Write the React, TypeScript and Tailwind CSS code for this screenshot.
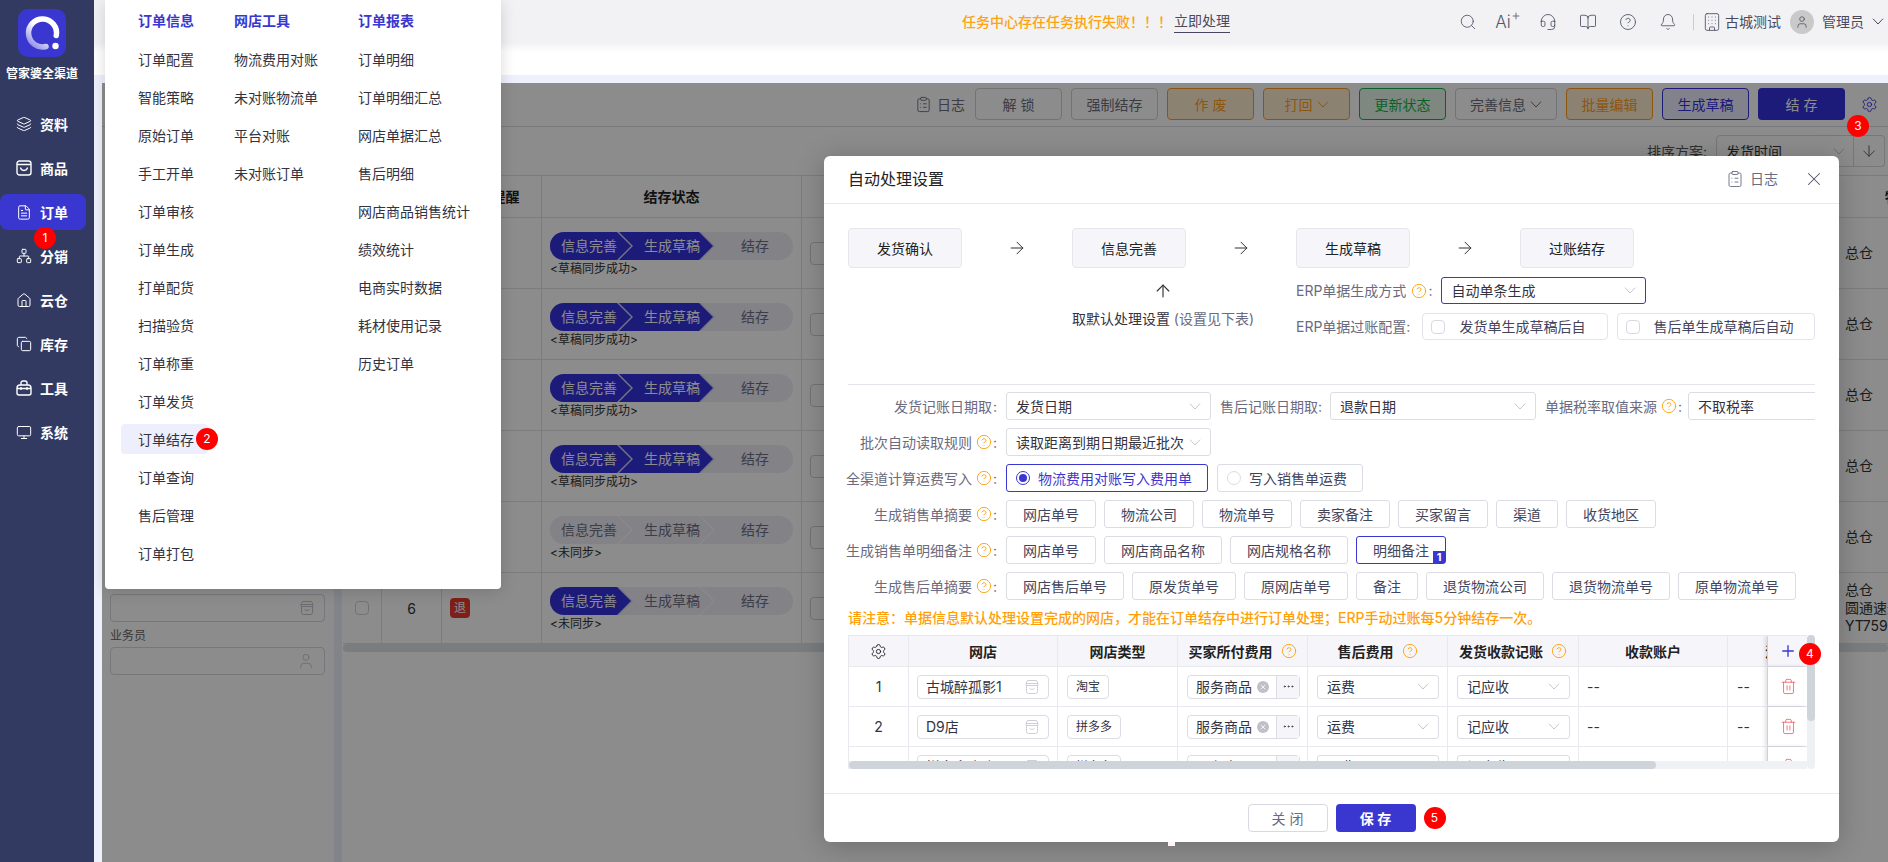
import React from 'react';
import {
  Layers, FileText, Network, Monitor, Search, Headset, BookOpen, CircleHelp, Bell, Building, User,
  Settings, ClipboardList, X, ArrowRight, ArrowUp, Plus, Trash2, Ellipsis, ArrowDown, House, Copy,
} from 'lucide-react';

function Chev({ className = 'text-[#c4c5cf]' }: { className?: string }) {
  return (
    <svg width="12" height="7" viewBox="0 0 12 7" fill="none" className={`shrink-0 ${className}`}>
      <polyline points="1,0.7 6,6 11,0.7" stroke="currentColor" strokeWidth="1" />
    </svg>
  );
}

function Store({ className = 'text-[#cdced9]' }: { className?: string }) {
  return (
    <svg width="16" height="16" viewBox="0 0 16 16" fill="none" className={`shrink-0 ${className}`}>
      <path d="M3.5 1.5h9l1.5 3v2h-12v-2z M2.5 6.5v6a2 2 0 0 0 2 2h7a2 2 0 0 0 2-2v-6 M2 4.5h12 M5.5 9.5c1 1.2 4 1.2 5 0" stroke="currentColor" strokeWidth="1" />
    </svg>
  );
}

function Help() {
  return <CircleHelp size={16} strokeWidth={1.4} className="shrink-0 text-[#fca311]" />;
}

function Badge({ n, className }: { n: number; className: string }) {
  return (
    <span className={`absolute flex h-[22px] w-[22px] items-center justify-center rounded-full bg-[#fe0000] text-[12px] font-normal text-white ${className}`}>
      {n}
    </span>
  );
}

function Bag() {
  return (
    <svg width="16" height="16" viewBox="0 0 16 16" fill="none">
      <rect x="1" y="1" width="14" height="14" rx="2.5" stroke="currentColor" strokeWidth="1.4" />
      <path d="M1 4.5h14 M4.5 7.5c.6 4 6.4 4 7 0" stroke="currentColor" strokeWidth="1.4" />
    </svg>
  );
}

function Toolbox() {
  return (
    <svg width="16" height="16" viewBox="0 0 16 16" fill="none">
      <path d="M1 8V13a2 2 0 0 0 2 2h10a2 2 0 0 0 2-2V8M1 8a3 3 0 0 1 3-3h8a3 3 0 0 1 3 3M1 8.5h14M5 5V3a2 2 0 0 1 2-2h2a2 2 0 0 1 2 2v2M5 7v3M11 7v3" stroke="currentColor" strokeWidth="1.4" />
    </svg>
  );
}

const NAV: [string, React.ReactNode][] = [
  ['资料', <Layers size={18} strokeWidth={1.5} />],
  ['商品', <Bag />],
  ['订单', <FileText size={19} strokeWidth={1.5} />],
  ['分销', <Network size={20} strokeWidth={1.5} />],
  ['云仓', <House size={19} strokeWidth={1.5} />],
  ['库存', <Copy size={18} strokeWidth={1.5} />],
  ['工具', <Toolbox />],
  ['系统', <Monitor size={19} strokeWidth={1.5} />],
];

function Sidebar() {
  return (
    <aside className="flex w-[94px] shrink-0 flex-col items-start bg-[#323a62]">
      <div className="ml-[18px] mt-[9px] flex h-12 w-12 items-center justify-center rounded-[10px] bg-[#3a37d0]">
        <svg width="48" height="48" viewBox="0 0 48 48" fill="none">
          <defs>
            <linearGradient id="lg" x1="36" y1="10" x2="14" y2="38" gradientUnits="userSpaceOnUse">
              <stop offset="0.45" stopColor="#ffffff" />
              <stop offset="1" stopColor="#8f8de6" />
            </linearGradient>
          </defs>
          <path d="M38.3 26.5A14 14 0 1 0 28 37.5" stroke="url(#lg)" strokeWidth="5.5" strokeLinecap="round" />
          <circle cx="37.5" cy="37" r="3.2" fill="#fff" />
        </svg>
      </div>
      <div className="mt-[9px] w-[84px] text-center text-[12px] font-bold leading-4 text-white">管家婆全渠道</div>
      <nav className="mt-6 flex flex-col gap-2">
        {NAV.map(([t, ic]) => (
          <div key={t} className={`flex h-9 w-[86px] items-center gap-2 rounded-lg pl-4 text-[14px] font-bold text-white ${t === '订单' ? 'bg-[#3a37d0]' : ''}`}>
            <span className="flex w-4 justify-center">{ic}</span>
            <span>{t}</span>
          </div>
        ))}
      </nav>
    </aside>
  );
}

function Header() {
  return (
    <header className="flex h-[43px] shrink-0 items-center bg-[#f2f2f5] text-[14px] text-[#4a4a5c]">
      <span className="ml-[868px] w-[212px] font-medium text-[#fca311]">任务中心存在任务执行失败！！！</span>
      <span className="border-b border-[#4a4560] pb-[1px] leading-5">立即处理</span>
      <div className="ml-[229px] flex items-center gap-[22px] text-[#55586c]">
        <span className="flex w-[18px] justify-center"><Search size={18} strokeWidth={1.2} /></span>
        <span className="flex w-[18px] items-start justify-center text-[17px] font-light leading-5">Ai<Plus size={10} strokeWidth={2} className="-mt-[1px] shrink-0" /></span>
        <span className="flex w-[18px] justify-center"><Headset size={20} strokeWidth={1.2} /></span>
        <span className="flex w-[18px] justify-center"><BookOpen size={20} strokeWidth={1.2} /></span>
        <span className="flex w-[18px] justify-center"><CircleHelp size={20} strokeWidth={1.2} /></span>
        <span className="flex w-[18px] justify-center"><Bell size={18} strokeWidth={1.2} /></span>
      </div>
      <span className="ml-[16px] h-4 w-px bg-[#c5c8e8]" />
      <Building size={20} strokeWidth={1.1} className="ml-[8px] text-[#55586c]" />
      <span className="ml-[3px]">古城测试</span>
      <span className="ml-[9px] flex h-6 w-6 items-center justify-center rounded-full bg-[#c9c9c9]"><User size={14} strokeWidth={1.3} /></span>
      <span className="ml-2">管理员</span>
      <Chev className="ml-2 text-[#4a4a5c]" />
    </header>
  );
}

const ORANGE = 'border-[#ff9d1e] bg-[#ffedcf] text-[#ff9d1e]';

function ToolBtn({ t, cls, wide, chev }: { t: string; cls: string; wide?: boolean; chev?: boolean }) {
  return (
    <button className={`flex h-8 items-center justify-center gap-1 rounded border text-[14px] ${wide ? 'w-[102px]' : 'w-[87px]'} ${cls}`}>
      {t}
      {chev && <Chev className="text-current" />}
    </button>
  );
}

function Toolbar() {
  const grey = 'border-[#d0d1da] bg-white text-[#6c6d7d]';
  return (
    <div className="flex h-[44px] shrink-0 items-center justify-end gap-[9px] border-b border-[#dddde2] pb-[1px] pr-[43px]">
      <span className="mr-[1px] flex items-center gap-[5px] text-[14px] text-[#6c6d7d]"><ClipboardList size={17} strokeWidth={1.3} />日志</span>
      <ToolBtn t="解 锁" cls={grey} />
      <ToolBtn t="强制结存" cls={grey} />
      <ToolBtn t="作 废" cls={ORANGE} />
      <ToolBtn t="打回" cls={ORANGE} chev />
      <ToolBtn t="更新状态" cls="border-[#13b24a] bg-[#e6f7eb] text-[#13b24a]" />
      <ToolBtn t="完善信息" cls={grey} wide chev />
      <ToolBtn t="批量编辑" cls={ORANGE} />
      <ToolBtn t="生成草稿" cls="border-[#3632de] bg-[#ecedfd] text-[#3632de]" />
      <button className="ml-[0px] flex h-8 w-[87px] items-center justify-center rounded bg-[#3632de] text-[14px] text-white">结 存</button>
      <Settings size={17} strokeWidth={1.3} className="absolute right-[10px] text-[#3632de]" />
    </div>
  );
}

function Flow({ s }: { s: number }) {
  return (
    <div className="isolate flex h-7 w-[243px] overflow-hidden rounded-full bg-[#eeeef6] text-[14px] leading-7 text-[#6f7085]">
      <div className="relative z-20 h-7 w-[83px] shrink-0">
        <div className={`absolute inset-0 [clip-path:polygon(0_0,69px_0,83px_50%,69px_100%,0_100%)] ${s >= 1 ? 'bg-[#d5d5ee]' : 'bg-[#fafafd]'}`} />
        <div className={`absolute inset-0 [clip-path:polygon(0_0,67px_0,81px_50%,67px_100%,0_100%)] ${s >= 1 ? 'bg-[#3632de]' : 'bg-[#eeeef6]'}`} />
        <span className={`relative pl-[11px] ${s >= 1 ? 'text-white' : ''}`}>信息完善</span>
      </div>
      <div className="relative z-10 -ml-[23px] h-7 w-[105px] shrink-0">
        <div className={`absolute inset-0 [clip-path:polygon(0_0,91px_0,105px_50%,91px_100%,0_100%)] ${s >= 2 ? 'bg-[#d5d5ee]' : 'bg-[#fafafd]'}`} />
        <div className={`absolute inset-0 [clip-path:polygon(0_0,89px_0,103px_50%,89px_100%,0_100%)] ${s >= 2 ? 'bg-[#3632de]' : 'bg-[#eeeef6]'}`} />
        <span className={`relative pl-[34px] ${s >= 2 ? 'text-white' : ''}`}>生成草稿</span>
      </div>
      <span className="pl-[26px]">结存</span>
    </div>
  );
}

const BG_ROWS = [
  { s: 2, sub: '<草稿同步成功>' },
  { s: 2, sub: '<草稿同步成功>' },
  { s: 2, sub: '<草稿同步成功>' },
  { s: 2, sub: '<草稿同步成功>' },
  { s: 0, sub: '<未同步>' },
  { s: 1, sub: '<未同步>' },
];

function BgTable() {
  const c = 'shrink-0 border-r border-[#e2e2e8] flex items-center';
  return (
    <div className="min-w-0 flex-1 overflow-hidden pl-px">
      <div className="flex h-[48px] items-center justify-end pr-[3px] text-[14px] text-[#555]">
        <span className="mr-[9px]">排序方案:</span>
        <div className="flex h-8 w-[138px] items-center justify-between rounded-l border border-[#d8d8e0] pl-[9px] pr-[8px] text-[#333]">发货时间<Chev /></div>
        <div className="flex h-8 w-[31px] items-center justify-center rounded-r border border-l-0 border-[#d8d8e0]"><ArrowDown size={18} strokeWidth={1.2} /></div>
      </div>
      <div className="w-[1618px] border-t border-[#e2e2e8] text-[14px] text-[#333]">
        <div className="flex h-[42px] border-b border-[#e2e2e8] font-bold text-[#222]">
          <div className={`${c} w-[39px]`} />
          <div className={`${c} w-[60px]`} />
          <div className={`${c} w-[100px] justify-center`}>结存提醒</div>
          <div className={`${c} w-[260px] justify-center`}>结存状态</div>
          <div className={`${c} w-[1035px]`} />
          <div className="w-[124px] shrink-0 text-center leading-[42px]">物流</div>
        </div>
        {BG_ROWS.map((r, i) => (
          <div key={i} className="flex h-[71px] border-b border-[#e2e2e8]">
            <div className={`${c} w-[39px] justify-center`}><span className="h-[14px] w-[14px] rounded-sm border border-[#d0d1da]" /></div>
            <div className={`${c} w-[60px] justify-center`}>{i + 1}</div>
            <div className={`${c} w-[100px] pl-2`}>
              {i === 5 && <span className="flex h-5 w-5 items-center justify-center rounded-sm bg-[#e53a2f] text-[12px] text-white">退</span>}
            </div>
            <div className={`${c} w-[260px] flex-col !items-start pl-2 pt-[14px]`}>
              <Flow s={r.s} />
              <span className="text-[12px] leading-[17px] text-[#333]">{r.sub}</span>
            </div>
            <div className={`${c} w-[1035px] pl-2`}>
              <span className="flex h-[23px] w-[60px] items-center justify-center rounded-sm border border-[#d0d1da]">详情</span>
            </div>
            <div className="flex w-[124px] shrink-0 flex-col justify-center whitespace-nowrap pl-2 leading-[18px]">
              <span>总仓</span>
              {i === 5 && <span>圆通速递</span>}
              {i === 5 && <span>YT7590000000</span>}
            </div>
          </div>
        ))}
      </div>
      <div className="h-2 w-full rounded-full bg-[#dfe3e8]" />
    </div>
  );
}

function FilterPanel() {
  const box = 'flex h-7 w-[215px] items-center justify-end rounded border border-[#d8d8e0] pr-[9px] text-[#bcbdc8]';
  return (
    <div className="w-[232px] shrink-0 px-2 pt-[467px] text-[12px] text-[#666]">
      <div className={box}><Store className="text-[#c4c5cf]" /></div>
      <div className="mb-[3px] mt-[6px] leading-4">业务员</div>
      <div className={box}><User size={18} strokeWidth={1} /></div>
    </div>
  );
}

const MENU = [
  { h: '订单信息', w: 'w-[96px]', items: ['订单配置', '智能策略', '原始订单', '手工开单', '订单审核', '订单生成', '打单配货', '扫描验货', '订单称重', '订单发货', '订单结存', '订单查询', '售后管理', '订单打包'] },
  { h: '网店工具', w: 'w-[124px]', items: ['物流费用对账', '未对账物流单', '平台对账', '未对账订单'] },
  { h: '订单报表', w: 'w-[120px]', items: ['订单明细', '订单明细汇总', '网店单据汇总', '售后明细', '网店商品销售统计', '绩效统计', '电商实时数据', '耗材使用记录', '历史订单'] },
];

function Menu() {
  return (
    <div className="absolute left-[105px] top-0 z-30 flex h-[589px] w-[396px] rounded-b bg-white pl-[33px] pt-[2px] text-[14px] text-[#33333f] shadow-[0_2px_16px_rgba(0,0,0,0.15)]">
      {MENU.map((col) => (
        <div key={col.h} className={`${col.w} shrink-0`}>
          <div className="h-[38px] font-bold leading-[38px] text-[#3a37d0]">{col.h}</div>
          {col.items.map((t) => (
            <div key={t} className="flex h-[38px] items-center whitespace-nowrap">
              {t === '订单结存' ? (
                <span className="relative -ml-[17px] flex h-[30px] w-[87px] items-center rounded bg-[#eeeffd] pl-[17px]">
                  {t}
                  <Badge n={2} className="left-[75px] top-1" />
                </span>
              ) : t}
            </div>
          ))}
        </div>
      ))}
    </div>
  );
}

function Box({ t }: { t: string }) {
  return <div className="flex h-10 w-[114px] shrink-0 items-center justify-center rounded border border-[#e6e6ee] bg-[#f6f6fa] text-[14px] text-[#222]">{t}</div>;
}

function Arrow() {
  return <div className="flex w-[110px] shrink-0 justify-center"><ArrowRight size={20} strokeWidth={1.2} className="text-[#333]" /></div>;
}

function Sel({ t, w, active, h = 'h-7' }: { t: string; w: string; active?: boolean; h?: string }) {
  return (
    <div className={`flex shrink-0 items-center justify-between rounded-[3px] border pl-[9px] pr-[9px] text-[14px] text-[#33333f] ${h} ${w} ${active ? 'border-[#3a37d0]' : 'border-[#dcdde4]'}`}>
      <span className="whitespace-nowrap">{t}</span>
      <Chev />
    </div>
  );
}

function Label({ t, help }: { t: string; help?: boolean }) {
  return (
    <div className="flex w-[149px] shrink-0 items-center justify-end whitespace-nowrap text-[14px] text-[#6a6b80]">
      {t}
      {help && <span className="ml-[4px]"><Help /></span>}
      <span className="ml-[1px] w-[4px]">:</span>
    </div>
  );
}

function Tag({ t, active }: { t: string; active?: boolean }) {
  return (
    <div className={`relative flex h-7 shrink-0 items-center rounded-[3px] border px-4 text-[14px] text-[#44445a] ${active ? 'border-[#3a37d0]' : 'border-[#dcdde4]'}`}>
      {t}
      {active && <span className="absolute bottom-0 right-0 flex h-3 w-3 items-center justify-center bg-[#3a37d0] text-[11px] font-bold leading-none text-white">1</span>}
    </div>
  );
}

function TagRow({ label, tags, active }: { label: string; tags: string[]; active?: string }) {
  return (
    <div className="flex h-7 items-center gap-[9px]">
      <Label t={label} help />
      <div className="flex gap-2">
        {tags.map((t) => <Tag key={t} t={t} active={t === active} />)}
      </div>
    </div>
  );
}

const COLS = ['w-[60px]', 'w-[149px]', 'w-[120px]', 'w-[130px]', 'w-[140px]', 'w-[131px]', 'w-[149px]', 'w-[40px]'];
const cell = 'flex shrink-0 items-center border-r border-[#e8e8ef]';

const T_ROWS = [
  { i: 1, n: '古城醉孤影1', t: '淘宝' },
  { i: 2, n: 'D9店', t: '拼多多' },
  { i: 3, n: '拼多多小店', t: '拼多多' },
];

function ModalTable() {
  const th = `${cell} justify-center gap-[8px] font-bold text-[#222]`;
  return (
    <div className="relative mt-[7px] flex h-[134px] w-[967px]">
      <div className="relative h-full w-[959px] overflow-hidden border-l border-t border-[#e8e8ef] text-[14px] text-[#33333f]">
        <div className="flex h-[31px] border-b border-[#e8e8ef] bg-[#f6f6fa]">
          <div className={`${th} ${COLS[0]}`}><Settings size={17} strokeWidth={1.3} /></div>
          <div className={`${th} ${COLS[1]}`}>网店</div>
          <div className={`${th} ${COLS[2]}`}>网店类型</div>
          <div className={`${th} ${COLS[3]}`}>买家所付费用<Help /></div>
          <div className={`${th} ${COLS[4]}`}>售后费用<Help /></div>
          <div className={`${th} ${COLS[5]}`}>发货收款记账<Help /></div>
          <div className={`${th} ${COLS[6]}`}>收款账户</div>
          <div className={`${cell} ${COLS[7]} overflow-hidden pl-[37px] font-bold text-[#222]`}>活</div>
          <div className="relative flex w-[40px] shrink-0 items-center justify-center bg-[#f6f6fa] shadow-[-3px_0_4px_rgba(0,0,0,0.12)]">
            <Plus size={18} strokeWidth={1.8} className="text-[#3a37d0]" />
          </div>
        </div>
        {T_ROWS.map((r) => (
          <div key={r.i} className="flex h-10 border-b border-[#e8e8ef]">
            <div className={`${cell} ${COLS[0]} justify-center`}>{r.i}</div>
            <div className={`${cell} ${COLS[1]} pl-2`}>
              <div className="flex h-6 w-[132px] items-center justify-between rounded-sm border border-[#dcdde4] px-2">{r.n}<Store /></div>
            </div>
            <div className={`${cell} ${COLS[2]} pl-[9px]`}>
              <span className="flex h-6 items-center rounded-sm border border-[#dcdde4] px-2 text-[12px]">{r.t}</span>
            </div>
            <div className={`${cell} ${COLS[3]} pl-[9px]`}>
              <div className="flex h-6 w-[113px] items-center rounded-sm border border-[#dcdde4] pl-2">
                服务商品
                <X size={12} strokeWidth={2.4} className="ml-[5px] rounded-full bg-[#bfbfc6] p-[2px] text-white" />
                <span className="ml-auto flex h-full w-[23px] items-center justify-center border-l border-[#dcdde4] bg-[#f6f6fa]"><Ellipsis size={13} strokeWidth={1.5} /></span>
              </div>
            </div>
            <div className={`${cell} ${COLS[4]} pl-[9px]`}><Sel t="运费" w="w-[122px]" h="h-6" /></div>
            <div className={`${cell} ${COLS[5]} pl-[9px]`}><Sel t="记应收" w="w-[113px]" h="h-6" /></div>
            <div className={`${cell} ${COLS[6]} pl-2`}>--</div>
            <div className={`${cell} ${COLS[7]} pl-[9px]`}>--</div>
            <div className="relative flex w-[40px] shrink-0 items-center justify-center bg-white shadow-[-3px_0_4px_rgba(0,0,0,0.12)]">
              <Trash2 size={17} strokeWidth={1.2} className="text-[#f4606c]" />
            </div>
          </div>
        ))}
        <div className="absolute bottom-0 left-0 right-0 h-2 bg-[#f0f1f5]">
          <div className="h-2 w-[807px] rounded-full bg-[#ced4da]" />
        </div>
      </div>
      <div className="h-full w-2 rounded-full bg-[#eff0f4]">
        <div className="h-[86px] w-2 rounded-full bg-[#ced4da]" />
      </div>
      <Badge n={4} className="left-[951px] top-2" />
    </div>
  );
}

function Modal() {
  return (
    <div className="absolute left-[824px] top-[156px] z-30 flex h-[686px] w-[1015px] flex-col rounded-md bg-white shadow-[0_4px_28px_rgba(0,0,0,0.22)]">
      <div className="flex h-[48px] shrink-0 items-center border-b border-[#e8e8ef] pb-[2px] pl-6 pr-[14px]">
        <span className="text-base text-[#222]">自动处理设置</span>
        <span className="ml-auto flex items-center gap-[6px] text-[14px] text-[#6a6b80]"><ClipboardList size={18} strokeWidth={1.2} />日志</span>
        <X size={22} strokeWidth={1.1} className="ml-[25px] text-[#55566a]" />
      </div>
      <div className="flex-1 px-6">
        <div className="mt-6 flex items-center">
          <Box t="发货确认" /><Arrow /><Box t="信息完善" /><Arrow /><Box t="生成草稿" /><Arrow /><Box t="过账结存" />
        </div>
        <div className="flex text-[14px]">
          <div className="ml-[225px] mt-[13px] flex w-[180px] shrink-0 flex-col items-center">
            <ArrowUp size={20} strokeWidth={1.4} className="text-[#333]" />
            <div className="mt-[8px] whitespace-nowrap leading-5 text-[#33333f]">取默认处理设置 <span className="text-[#6a6b80]">(设置见下表)</span></div>
          </div>
          <div className="ml-[43px] mt-[9px] flex flex-col gap-[9px] whitespace-nowrap text-[#6a6b80]">
            <div className="flex h-[27px] items-center">
              <span>ERP单据生成方式</span>
              <span className="ml-[5px]"><Help /></span>
              <span className="ml-[1px] mr-[9px]">:</span>
              <Sel t="自动单条生成" w="w-[205px]" h="h-[27px]" active />
            </div>
            <div className="flex h-[27px] items-center">
              <span className="shrink-0">ERP单据过账配置:</span>
              <div className="ml-[12px] flex shrink-0 gap-[9px] text-[#44445a]">
                <div className="flex h-[27px] w-[186px] items-center rounded border border-[#e4e4ec] pl-2">
                  <span className="h-[14px] w-[14px] rounded-sm border border-[#d8d9e2]" />
                  <span className="ml-[14px]">发货单生成草稿后自</span>
                </div>
                <div className="flex h-[27px] w-[198px] items-center rounded border border-[#e4e4ec] pl-2">
                  <span className="h-[14px] w-[14px] rounded-sm border border-[#d8d9e2]" />
                  <span className="ml-[13px]">售后单生成草稿后自动</span>
                </div>
              </div>
            </div>
          </div>
        </div>
        <div className="mt-[44px] border-t border-[#e4e4ec]" />
        <div className="mt-[7px] flex flex-col gap-2">
          <div className="flex h-7 items-center overflow-hidden">
            <Label t="发货记账日期取" />
            <div className="ml-[9px]"><Sel t="发货日期" w="w-[205px]" /></div>
            <span className="ml-[9px] whitespace-nowrap text-[14px] text-[#6a6b80]">售后记账日期取:</span>
            <div className="ml-[8px]"><Sel t="退款日期" w="w-[206px]" /></div>
            <span className="ml-[9px] whitespace-nowrap text-[14px] text-[#6a6b80]">单据税率取值来源</span>
            <span className="ml-[4px]"><Help /></span>
            <span className="ml-[1px] mr-[6px] text-[14px] text-[#6a6b80]">:</span>
            <Sel t="不取税率" w="w-[205px]" />
          </div>
          <div className="flex h-7 items-center gap-[9px]">
            <Label t="批次自动读取规则" help />
            <Sel t="读取距离到期日期最近批次" w="w-[205px]" />
          </div>
          <div className="flex h-7 items-center gap-[9px]">
            <Label t="全渠道计算运费写入" help />
            <div className="flex h-7 w-[202px] items-center rounded-[3px] border border-[#3a37d0] pl-[9px] text-[14px] text-[#3a37d0]">
              <span className="flex h-[14px] w-[14px] items-center justify-center rounded-full border border-[#3a37d0]"><span className="h-2 w-2 rounded-full bg-[#3a37d0]" /></span>
              <span className="ml-2">物流费用对账写入费用单</span>
            </div>
            <div className="flex h-7 w-[146px] items-center rounded-[3px] border border-[#dcdde4] pl-[9px] text-[14px] text-[#44445a]">
              <span className="h-[14px] w-[14px] rounded-full border border-[#dcdde4]" />
              <span className="ml-2">写入销售单运费</span>
            </div>
          </div>
          <TagRow label="生成销售单摘要" tags={['网店单号', '物流公司', '物流单号', '卖家备注', '买家留言', '渠道', '收货地区']} />
          <TagRow label="生成销售单明细备注" tags={['网店单号', '网店商品名称', '网店规格名称', '明细备注']} active="明细备注" />
          <TagRow label="生成售后单摘要" tags={['网店售后单号', '原发货单号', '原网店单号', '备注', '退货物流公司', '退货物流单号', '原单物流单号']} />
        </div>
        <div className="mt-[8px] whitespace-nowrap text-[14px] font-medium leading-5 text-[#ff9f0a]">
          请注意：单据信息默认处理设置完成的网店，才能在订单结存中进行订单处理；ERP手动过账每5分钟结存一次。
        </div>
        <ModalTable />
      </div>
      <div className="flex h-[49px] shrink-0 items-center justify-center gap-2 border-t border-[#e8e8ef]">
        <button className="h-7 w-[80px] rounded border border-[#d8d9e2] text-[14px] text-[#6a6b80]">关 闭</button>
        <div className="relative">
          <button className="h-7 w-[80px] rounded bg-[#3a37d0] text-[14px] font-bold text-white">保 存</button>
          <Badge n={5} className="left-[88px] top-[3px]" />
        </div>
      </div>
    </div>
  );
}

export default function App() {
  return (
    <div className="relative flex h-[862px] w-[1888px] overflow-hidden bg-white [font-family:Inter,'Noto_Sans_CJK_SC',sans-serif]">
      <Sidebar />
      <main className="flex min-w-0 flex-1 flex-col bg-[#eef0fc]">
        <Header />
        <div className="h-[32px] shrink-0 bg-gradient-to-b from-[#f2f2f5] to-white to-[28%]" />
        <div className="h-2 shrink-0" />
        <div className="relative ml-2 flex min-h-0 flex-1 flex-col bg-white">
          <Toolbar />
          <div className="flex min-h-0 flex-1">
            <FilterPanel />
            <div className="w-2 shrink-0 bg-[#eef0fc]" />
            <BgTable />
          </div>
          <div className="absolute inset-0 z-10 bg-black/45" />
        </div>
      </main>
      <Menu />
      <Modal />
      <Badge n={1} className="left-[34px] top-[227px] z-40" />
      <Badge n={3} className="left-[1847px] top-[115px] z-40" />
      <div className="absolute left-[1168px] top-[842px] z-30 h-[4px] w-[7px] bg-[#fff4f4]" />
    </div>
  );
}
